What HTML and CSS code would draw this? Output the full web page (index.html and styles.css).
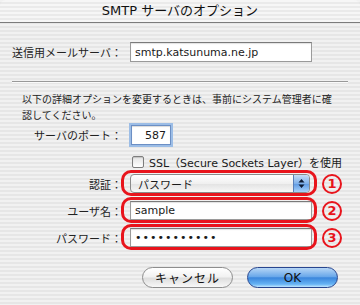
FILE: index.html
```html
<!DOCTYPE html>
<html lang="ja">
<head>
  <meta charset="UTF-8" />
  <title>SMTP サーバのオプション</title>
  <link rel="stylesheet" href="styles.css">
</head>
<body>

  <div class="window">
    <!-- Title bar -->
    <div class="titlebar">SMTP サーバのオプション</div>

    <!-- Server -->
    <div class="row server">
      <label class="label">送信用メールサーバ：</label>
      <div class="field text wide">smtp.katsunuma.ne.jp</div>
    </div>

    <div class="groove"></div>

    <p class="note">以下の詳細オプションを変更するときは、事前にシステム管理者に確<br>認してください。</p>

    <!-- Port -->
    <div class="row port">
      <label class="label">サーバのポート：</label>
      <div class="field text small focus">587</div>
    </div>

    <div class="row ssl">
      <div class="check"><span class="box"></span>SSL（Secure Sockets Layer）を使用</div>
    </div>

    <!-- Marked rows -->
    <div class="row marked">
      <label class="label">認証：</label>
      <div class="field popup">
        <span>パスワード</span>
        <span class="arrows">
          <svg width="7" height="11" viewBox="0 0 7 11"><path d="M3.5 1 L6.5 4.5 L0.5 4.5 Z M3.5 10 L6.5 6.5 L0.5 6.5 Z" fill="#0d1a33"/></svg>
        </span>
      </div>
      <span class="num">1</span>
    </div>

    <div class="row marked">
      <label class="label">ユーザ名：</label>
      <div class="field text wide">sample</div>
      <span class="num">2</span>
    </div>

    <div class="row marked">
      <label class="label">パスワード：</label>
      <div class="field text wide dots">•••••••••••</div>
      <span class="num">3</span>
    </div>

    <!-- Buttons -->
    <div class="buttons">
      <button class="btn cancel">キャンセル</button>
      <button class="btn ok">OK</button>
    </div>
  </div>

</body>
</html>
```

FILE: styles.css
```css
/* General */
body {
  margin: 0;
  font-family: "DejaVu Sans", "Noto Sans CJK JP", sans-serif;
}
.window {
  width: 360px;
  height: 305px;
  overflow: hidden;
  color: #1a1a1a;
  background: repeating-linear-gradient(#f1f1f1 0 2px, #e6e6e6 2px 4px);
}
.label {
  font-family: "Noto Sans CJK JP", sans-serif;
  font-size: 11px;
  text-align: right;
  color: #222;
}

/* Title bar */
.titlebar {
  height: 23px;
  box-sizing: border-box;
  border-bottom: 1px solid #7c7c7c;
  border-radius: 6px 6px 0 0;
  background: repeating-linear-gradient(#f6f6f6 0 2px, #eaeaea 2px 4px);
  text-align: center;
  font-size: 13px;
  line-height: 22px;
  color: #111;
}

/* Rows */
.row {
  display: grid;
  grid-template-columns: 122px 182px 20px;
  column-gap: 8px;
  align-items: center;
}
.row.server {
  margin-top: 19px;
  height: 20px;
}
.field {
  height: 20px;
  box-sizing: border-box;
  display: flex;
  align-items: center;
  font-size: 11px;
}
.field.text {
  background: #fff;
  border: 1px solid #9a9a9a;
  border-top-color: #7a7a7a;
  box-shadow: inset 0 1px 1px rgba(0,0,0,0.12);
  padding: 0 4px;
}
.field.small {
  width: 40px;
  justify-content: flex-end;
  margin-left: 1px;
}
.field.focus {
  border-color: #6c8fc4;
  box-shadow: 0 0 0 2px #9cbde6, inset 0 1px 1px rgba(0,0,0,0.15);
}

.groove {
  margin: 19px 12px 0;
  height: 1px;
  background: #999;
  border-bottom: 1px solid #fafafa;
}

.note {
  margin: 8px 0 0 22px;
  font-family: "Noto Sans CJK JP", sans-serif;
  font-size: 10px;
  line-height: 16px;
  color: #222;
}

.row.port {
  margin-top: 1px;
  height: 22px;
}
.row.ssl {
  margin-top: 8px;
  height: 14px;
}
.check {
  grid-column: 2 / 4;
  display: flex;
  align-items: center;
  gap: 5px;
  font-size: 11px;
  white-space: nowrap;
  padding-left: 2px;
}
.check .box {
  flex-shrink: 0;
  width: 12px;
  height: 12px;
  box-sizing: border-box;
  border: 1px solid #7d7d7d;
  border-radius: 2px;
  background: linear-gradient(#e4e4e4, #ffffff);
  box-shadow: inset 0 1px 1px rgba(0,0,0,0.15);
}

/* Annotated rows */
.row.marked {
  height: 27px;
}
.ssl + .marked {
  margin-top: 2px;
}
.marked .field {
  position: relative;
  height: 19px;
}
.marked .field::before {
  content: "";
  position: absolute;
  top: -5px;
  bottom: -4px;
  left: -10px;
  right: -6px;
  border: 3px solid #e8141c;
  border-radius: 10px;
}
.marked .popup::before {
  right: -8px;
}
.popup {
  width: 180px;
  border: 1px solid #8a8a8a;
  border-radius: 4px;
  background: linear-gradient(#ffffff, #f0f0f0 50%, #e2e2e2 51%, #f7f7f7);
  font-family: "Noto Sans CJK JP", sans-serif;
  justify-content: space-between;
  padding-left: 7px;
}
.popup .arrows {
  width: 15px;
  height: 17px;
  display: flex;
  align-items: center;
  justify-content: center;
  border-radius: 0 3px 3px 0;
  border-left: 1px solid #5a7fb8;
  background: linear-gradient(#c6ddf6, #7fb0ea 50%, #5c98e2 51%, #a9d2fb);
}
.dots {
  font-size: 11px;
  letter-spacing: 1px;
}
.num {
  width: 20px;
  height: 20px;
  box-sizing: border-box;
  border: 2.5px solid #e8141c;
  border-radius: 50%;
  color: #e8141c;
  font-weight: bold;
  font-size: 13px;
  display: flex;
  align-items: center;
  justify-content: center;
  margin-left: 2px;
}

/* Buttons */
.buttons {
  display: flex;
  justify-content: flex-end;
  gap: 14px;
  padding-right: 22px;
  margin-top: 16px;
}
.btn {
  width: 91px;
  height: 21px;
  border-radius: 11px;
  font-family: "Noto Sans CJK JP", "DejaVu Sans", sans-serif;
  font-size: 12px;
  color: #111;
  padding: 0;
}
.btn.cancel {
  border: 1px solid #8d8d8d;
  background: linear-gradient(#ffffff, #f2f2f2 45%, #dedede 55%, #f8f8f8);
  letter-spacing: 1px;
}
.btn.ok {
  font-family: "DejaVu Sans", sans-serif;
  border: 1px solid #28468f;
  background: linear-gradient(#b6d6f6, #6aa8ea 45%, #3b86dc 52%, #66b3f4 85%, #bfe6ff);
}
```
